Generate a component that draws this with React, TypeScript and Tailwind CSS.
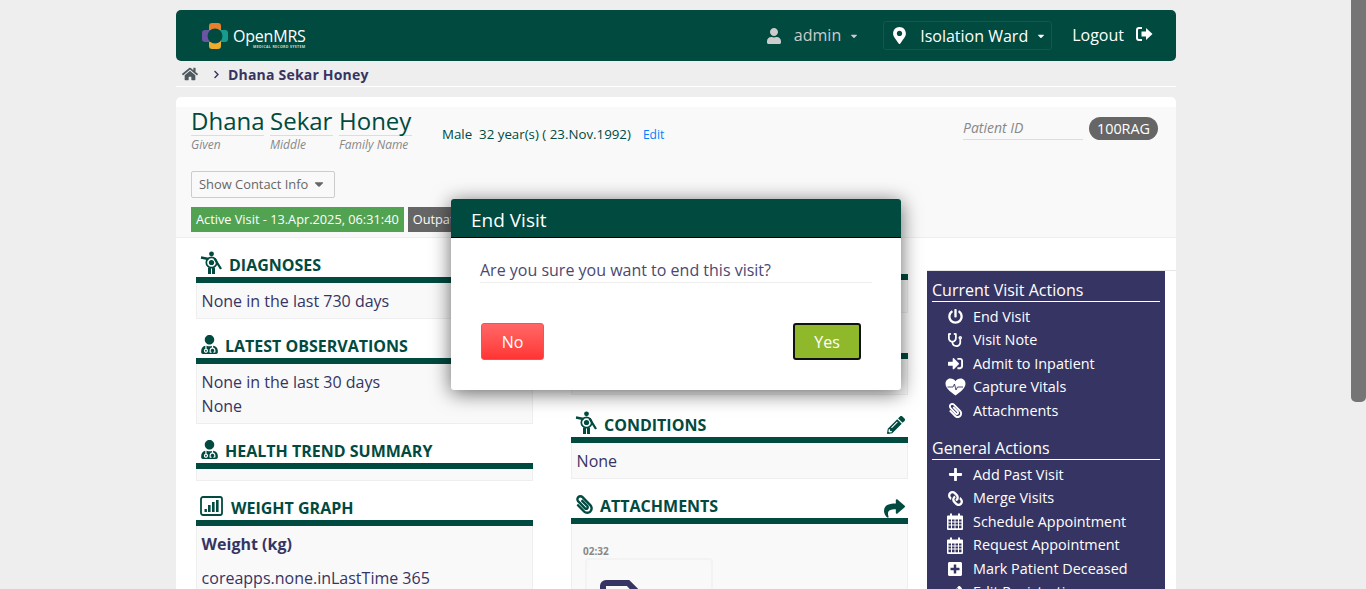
import React from 'react';
import {
  FaHome, FaUser, FaMapMarkerAlt, FaCaretDown, FaPowerOff, FaStethoscope, FaSignInAlt,
  FaPaperclip, FaPlus, FaLink, FaPlusSquare, FaPencilAlt, FaShare, FaUserMd, FaChevronRight,
} from 'react-icons/fa';

const Body = () => (
  <svg width="24" height="24" viewBox="0 0 24 24" className="text-[#004a40] shrink-0 -mr-[1px]">
    <circle cx="11.5" cy="2.8" r="2.4" fill="currentColor" />
    <path d="M1 6.5 L8.5 8 M14.5 7.5 L21 18" stroke="currentColor" strokeWidth="2.3" fill="none" />
    <circle cx="11.5" cy="11.5" r="5.2" stroke="currentColor" strokeWidth="1.7" fill="none" />
    <circle cx="11.5" cy="11.5" r="2.6" fill="currentColor" />
    <path d="M8 16.5h3v6.5H8zM12 16.5h3v6.5h-3z" fill="currentColor" />
  </svg>
);

const ChartIcon = () => (
  <svg width="23" height="20" viewBox="0 0 23 20" className="shrink-0 text-[#004a40] mr-[2px]">
    <rect x="1" y="1" width="21" height="18" rx="2" fill="none" stroke="currentColor" strokeWidth="1.8" />
    <path d="M4.5 13h2.4v3H4.5zM8 9h2.6v7H8zM12 6h2.6v10H12zM16 4h2.6v12H16z" fill="currentColor" />
  </svg>
);

const Logo = () => (
  <svg width="26" height="26" viewBox="0 0 26 26" className="shrink-0">
    <rect x="7" y="0" width="12" height="12" rx="3" fill="#e9812b" />
    <rect x="14" y="7" width="12" height="12" rx="3" fill="#189b8c" />
    <rect x="7" y="14" width="12" height="12" rx="3" fill="#eeab2d" />
    <rect x="0" y="7" width="12" height="12" rx="3" fill="#6a55a5" />
    <circle cx="13" cy="13" r="7.5" fill="#004a40" />
  </svg>
);

const HeartIcon = () => (
  <svg width="21" height="18" viewBox="0 0 21 18">
    <path d="M10.5 17.5 C5 13.5 0.5 10 0.5 5.5 C0.5 2.5 3 0.5 5.5 0.5 C7.5 0.5 9.5 1.5 10.5 3.2 C11.5 1.5 13.5 0.5 15.5 0.5 C18 0.5 20.5 2.5 20.5 5.5 C20.5 10 16 13.5 10.5 17.5 Z" fill="white" />
    <path d="M2.5 9 H8 L9.5 6 L11 12 L12.5 9 H18" fill="none" stroke="#363463" strokeWidth="0.9" />
  </svg>
);

const CalendarIcon = () => (
  <svg width="16" height="17" viewBox="0 0 16 17">
    <path d="M3 0.5h2v3H3zM11 0.5h2v3h-2z" fill="white" />
    <path fillRule="evenodd" d="M1 2.5h14a1 1 0 0 1 1 1V16a1 1 0 0 1-1 1H1a1 1 0 0 1-1-1V3.5a1 1 0 0 1 1-1ZM1.5 6.5v2h2.5v-2zM5 6.5v2h2.5v-2zM8.5 6.5v2H11v-2zM12 6.5v2h2.5v-2zM1.5 9.5v2h2.5v-2zM5 9.5v2h2.5v-2zM8.5 9.5v2H11v-2zM12 9.5v2h2.5v-2zM1.5 12.5v2.8h2.5v-2.8zM5 12.5v2.8h2.5v-2.8zM8.5 12.5v2.8H11v-2.8zM12 12.5v2.8h2.5v-2.8z" fill="white" />
  </svg>
);

type SectionProps = {
  title: string;
  icon: React.ReactNode;
  gap: string;
  action?: React.ReactNode;
  children?: React.ReactNode;
  boxClass?: string;
};

const Section = ({ title, icon, gap, action, children, boxClass }: SectionProps) => (
  <section className={gap}>
    <div className="h-[28px] flex items-center pl-[4px]">
      {icon}
      <h2 className="text-[16px] leading-none font-bold uppercase text-[#004a40] ml-[6px] mt-[3px]">{title}</h2>
      {action && <span className="ml-auto mr-[3px] mt-[4px] text-[#004a40]">{action}</span>}
    </div>
    <div className="h-[6px] bg-[#004a40]" />
    <div className={`bg-[#f9f9f9] border border-t-0 border-[#eeeeee] px-[4.6px] text-[16px] leading-[24px] text-[#363463] ${boxClass ?? ''}`}>
      {children}
    </div>
  </section>
);

const ActionItem = ({ icon, label }: { icon: React.ReactNode; label: string }) => (
  <li className="h-[23.5px] flex items-center text-white text-[14.4px] font-medium">
    <span className="w-[41px] pl-[5px] flex justify-center items-center shrink-0">{icon}</span>
    <span>{label}</span>
  </li>
);

const ActionHeading = ({ label }: { label: string }) => (
  <h3 className="text-[16px] leading-[22px] text-white border-b border-white mr-[5px] h-[23px]">{label}</h3>
);

export default function App() {
  return (
    <div className="h-[589px] overflow-hidden flex bg-[#eeeeee] text-[#363463]" style={{ fontFamily: '"Open Sans", sans-serif' }}>
      <div className="flex-1 relative min-w-0">
        <div className="w-[1000px] ml-[176px] pt-[10px]">
          <header className="h-[51px] bg-[#004a40] rounded-[5px] flex items-center pl-[26px] text-white">
            <Logo />
            <div className="ml-[5px] mt-[5px]">
              <div className="text-[16px] leading-[16px] tracking-[-0.2px]">OpenMRS</div>
              <div className="text-[3.6px] leading-[5px] font-bold text-[#cfd8d6] tracking-[0.3px] ml-[20px] whitespace-nowrap">MEDICAL RECORD SYSTEM</div>
            </div>
            <div className="ml-auto flex items-center">
              <FaUser size={16} className="text-[#cccccc]" />
              <span className="ml-[12px] text-[16px] text-[#cccccc] -mt-[2px]">admin</span>
              <FaCaretDown size={10} className="ml-[8px] text-[#cccccc]" />
              <div className="ml-[24px] w-[169px] h-[29px] border border-[#0a5c50] rounded-[3px] flex items-center pl-[7px]">
                <FaMapMarkerAlt size={17} className="text-white" />
                <span className="ml-[12px] text-[16px] text-white">Isolation Ward</span>
                <FaCaretDown size={10} className="ml-[8px] text-white" />
              </div>
              <span className="ml-[20px] text-[16px] text-white -mt-[2px]">Logout</span>
              <svg width="17" height="14" viewBox="0 0 17 14" className="ml-[12px] mr-[23px] -mt-[3px] text-white">
                <path d="M6 1H3a2 2 0 0 0-2 2v8a2 2 0 0 0 2 2h3" fill="none" stroke="currentColor" strokeWidth="2" />
                <path d="M5.5 4.5H10V1l6.5 6L10 13V9.5H5.5z" fill="currentColor" />
              </svg>
            </div>
          </header>

          <nav className="h-[26px] border-b border-white flex items-center pl-[6px] pt-[1px]">
            <FaHome size={16} className="text-[#4e5a60] -mt-[1px]" />
            <FaChevronRight size={9} className="ml-[14px] text-[#363463]" />
            <span className="ml-[7px] text-[14px] font-bold text-[#363463] tracking-[0.2px]">Dhana Sekar Honey</span>
          </nav>

          <div className="mt-[10px] bg-white rounded-t-[5px] pt-[10px]">
            <div className="h-[131px] bg-[#f9f9f9] border-b border-[#eeeeee] pl-[15px] pr-[18px] relative">
              <div className="flex">
                <div className="flex gap-[6px]">
                  {[['Dhana', 'Given', 'w-[73px]'], ['Sekar', 'Middle', 'w-[63px]'], ['Honey', 'Family Name', 'w-[73px]']].map(([name, label, width]) => (
                    <div key={name} className={width}>
                      <div className="text-[24px] leading-[28px] text-[#004a40] border-b border-[#dddddd] whitespace-nowrap">{name}</div>
                      <div className="text-[12px] leading-[17px] italic text-[#888888] whitespace-nowrap">{label}</div>
                    </div>
                  ))}
                </div>
                <div className="ml-[30px] mt-[18px] text-[13.3px] leading-[18px] text-[#004a40] whitespace-pre">
                  Male  32 year(s) ( 23.Nov.1992)
                  <span className="ml-[12px] text-[12px] text-[#007fff]">Edit</span>
                </div>
                <div className="ml-auto flex items-start mt-[10px]">
                  <div className="w-[120px] h-[23px] border-b border-[#dddddd] text-[14px] leading-[22px] italic text-[#888888]">Patient ID</div>
                  <div className="ml-[6px] h-[23px] w-[69px] rounded-full bg-[#666666] text-white text-[14.4px] leading-[23px] text-center">100RAG</div>
                </div>
              </div>
              <div className="mt-[18px] w-[144px] h-[27px] border border-[#cccccc] rounded-[2px] flex items-center pl-[7px] text-[12.9px] text-[#666666]">
                Show Contact Info
                <FaCaretDown size={14} className="ml-[4px] -mt-[2px]" />
              </div>
              <div className="mt-[9px] flex gap-[4px] text-[12.75px] text-white">
                <span className="h-[25px] leading-[24px] px-[5px] bg-[#51a351] whitespace-nowrap">Active Visit - 13.Apr.2025, 06:31:40</span>
                <span className="h-[25px] leading-[24px] px-[5px] bg-[#666666]">Outpatient</span>
              </div>
            </div>

            <div className="flex pl-[20px] pb-[40px]">
              <div className="w-[337px]">
                <Section gap="pt-[11px]" title="Diagnoses" icon={<Body />} boxClass="h-[36px] pt-[6px]">
                  None in the last 730 days
                </Section>
                <Section gap="pt-[11px]" title="Latest Observations" icon={<FaUserMd size={19} className="text-[#004a40]" />} boxClass="h-[60px] pt-[6px]">
                  None in the last 30 days<br />None
                </Section>
                <Section gap="pt-[11px]" title="Health Trend Summary" icon={<FaUserMd size={19} className="text-[#004a40]" />} boxClass="h-[12px]" />
                <Section gap="pt-[11px]" title="Weight Graph" icon={<ChartIcon />} boxClass="h-[100px] pt-[6px]">
                  <b className="font-bold">Weight (kg)</b>
                  <p className="mt-[10px]">coreapps.none.inLastTime 365</p>
                </Section>
              </div>

              <div className="w-[337px] ml-[38px]">
                <Section gap="pt-[8px]" title="" icon={null} boxClass="h-[33px] flex justify-end items-center">
                  <span className="w-[8px] h-[20px] mr-[1px] bg-[#004a40]/60" />
                </Section>
                <Section gap="pt-[12px]" title="" icon={null} boxClass="h-[36px]" />
                <Section gap="pt-[14px]" title="Conditions" icon={<Body />} action={<FaPencilAlt size={18} />} boxClass="h-[36px] pt-[6px]">
                  None
                </Section>
                <Section gap="pt-[11px]" title="Attachments" icon={<FaPaperclip size={19} className="text-[#004a40] -scale-x-100" />} action={<FaShare size={21} className="mt-[5px]" />} boxClass="h-[100px] pt-[21px] pl-[11px]">
                  <div className="text-[10px] leading-[12px] font-bold text-[#888888]">02:32</div>
                  <div className="ml-[2px] mt-[1px] w-[128px] h-[80px] bg-[#f9f9f9] border-2 border-[#f3f3f3] rounded-[4px] pl-[12px] pt-[20px]">
                    <svg width="46" height="50" viewBox="0 0 46 50">
                      <path d="M4 48V6a3 3 0 0 1 3-3h22l14 14v31" fill="none" stroke="#363463" strokeWidth="6" />
                    </svg>
                  </div>
                </Section>
              </div>

              <aside className="ml-[19px] flex-1 mt-[32px] border-t border-[#e6e6e6]">
                <div className="w-[238px] bg-[#363463] pl-[5px] pt-[8px] pb-[30px]">
                  <ActionHeading label="Current Visit Actions" />
                  <ul className="mt-[3px]">
                    <ActionItem icon={<FaPowerOff size={15} />} label="End Visit" />
                    <ActionItem icon={<FaStethoscope size={14} />} label="Visit Note" />
                    <ActionItem icon={<FaSignInAlt size={15} />} label="Admit to Inpatient" />
                    <ActionItem icon={<HeartIcon />} label="Capture Vitals" />
                    <ActionItem icon={<FaPaperclip size={15} className="-scale-x-100" />} label="Attachments" />
                  </ul>
                  <div className="mt-[14px]">
                    <ActionHeading label="General Actions" />
                  </div>
                  <ul className="mt-[3.5px]">
                    <ActionItem icon={<FaPlus size={15} />} label="Add Past Visit" />
                    <ActionItem icon={<FaLink size={15} className="-scale-x-100" />} label="Merge Visits" />
                    <ActionItem icon={<CalendarIcon />} label="Schedule Appointment" />
                    <ActionItem icon={<CalendarIcon />} label="Request Appointment" />
                    <ActionItem icon={<FaPlusSquare size={16} />} label="Mark Patient Deceased" />
                    <ActionItem icon={<FaPencilAlt size={13} />} label="Edit Registration" />
                  </ul>
                </div>
              </aside>
            </div>
          </div>
        </div>

        <div className="absolute left-[451px] top-[199px] w-[450px] h-[191px] bg-white rounded-[3px] shadow-[0_3px_20px_rgba(0,0,0,0.6)]">
          <div className="h-[39px] bg-[#004a40] border-b border-black rounded-t-[3px] pl-[20px] text-[19px] leading-[42px] text-white">End Visit</div>
          <div className="px-[29px] pt-[21px]">
            <p className="h-[24px] border-b border-[#eeeeee] text-[16px] leading-[22px] text-[#4a4872]">Are you sure you want to end this visit?</p>
            <div className="mt-[40px] flex justify-between pl-[1px] pr-[11px]">
              <button className="w-[63px] h-[37px] rounded-[3px] border border-[#ff4d4d] bg-gradient-to-b from-[#ff6666] to-[#ff3333] text-white text-[16px] font-medium">No</button>
              <button className="w-[68px] h-[37px] rounded-[3px] border-2 border-[#111111] bg-[#90b82b] text-white text-[16px] font-medium">Yes</button>
            </div>
          </div>
        </div>
      </div>

      <div className="w-[15px] shrink-0">
        <div className="h-[402px] bg-[#757575] rounded-b-[5px]" />
      </div>
    </div>
  );
}
